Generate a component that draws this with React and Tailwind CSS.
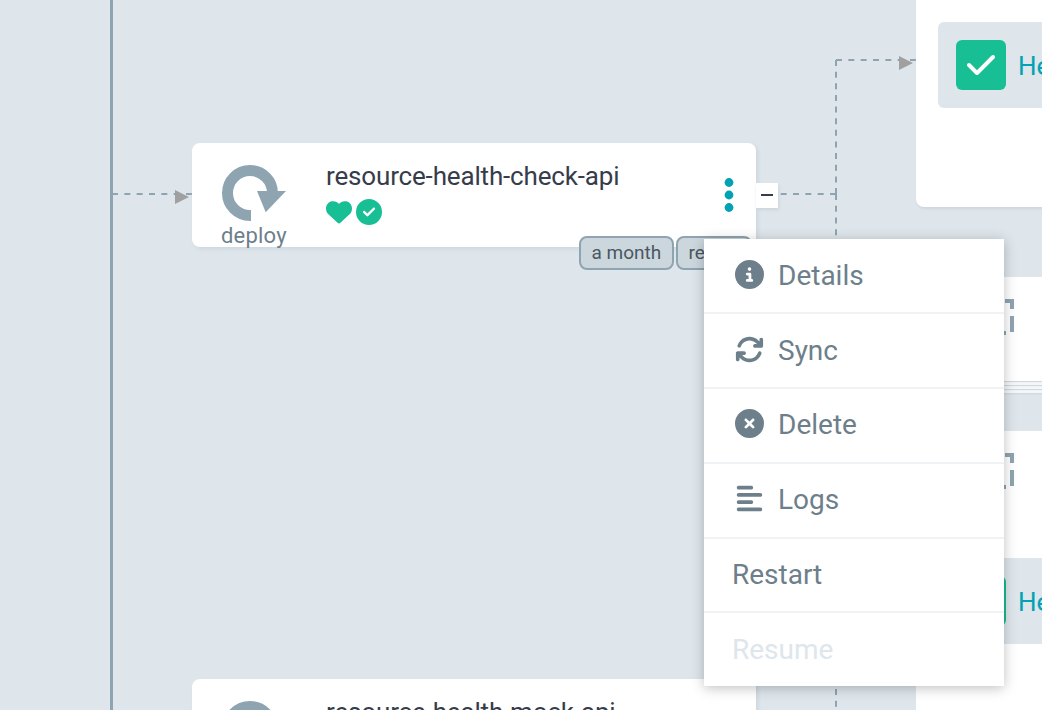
import React from "react";
import { FaCircleInfo, FaArrowsRotate, FaCircleXmark, FaAlignLeft, FaHeart, FaCircleCheck, FaCheck } from "react-icons/fa6";

const MENU = [
  { label: "Details", Icon: FaCircleInfo, height: "h-[75px]" },
  { label: "Sync", Icon: FaArrowsRotate, height: "h-[75px]" },
  { label: "Delete", Icon: FaCircleXmark, height: "h-[75px] pb-[2px]" },
  { label: "Logs", Icon: FaAlignLeft, height: "h-[75px] pb-[2px]" },
  { label: "Restart", height: "h-[74px]" },
  { label: "Resume", height: "h-[73px]", disabled: true },
];

function Edges() {
  return (
    <svg className="absolute inset-0" width="1042" height="710" fill="none" stroke="#8fa4b1" strokeWidth="2">
      <path d="M111.5 0V710" strokeWidth="3" />
      <path d="M112 194H192M756 194H836" strokeDasharray="6 6.333" />
      <path d="M836 60H916" strokeDasharray="6 6.333" />
      <path d="M836 60V194" strokeDasharray="6 5.64" />
      <path d="M836 194V710" strokeDasharray="6 5.786" />
      <path d="M175 190L189 197L175 204Z M899 56L913 63L899 70Z" fill="#a0a0a0" stroke="none" />
    </svg>
  );
}

function DeployIcon() {
  return (
    <svg className="block shrink-0" width="66" height="58" viewBox="0 0 66 58">
      <path d="M30 50.5H29A22.5 22.5 0 1 1 51.5 28" fill="none" stroke="#8fa4b1" strokeWidth="11" />
      <path d="M36 26H65L44.7 47.3Z" fill="#8fa4b1" stroke="none" />
    </svg>
  );
}

function ResourceNode({ name, place, children }) {
  return (
    <div className={`absolute left-[192px] flex h-[104px] w-[564px] rounded-lg bg-white shadow-[2px_2px_4px_#ccd6dd] ${place}`}>
      <div className="flex w-[134px] flex-col pt-[22px] pl-[29px]">
        <DeployIcon />
        <span className="text-[22px] leading-[26px] tracking-[0.2px] text-[#6d7f8b]">deploy</span>
      </div>
      <div className="flex flex-1 flex-col pt-[17px]">
        <span className="text-[26px] leading-[32px] tracking-[-0.16px] text-[#363c4a]">{name}</span>
        <div className="mt-[7px] flex gap-[4px] text-[26px] text-[#18be94]">
          <FaHeart />
          <FaCircleCheck />
        </div>
      </div>
      <svg className="mt-[33px] mr-[20px]" width="14" height="38" fill="#00a2b3">
        <circle cx="7" cy="6.5" r="4.4" />
        <circle cx="7" cy="19" r="4.4" />
        <circle cx="7" cy="31.5" r="4.4" />
      </svg>
      {children}
    </div>
  );
}

function Tag({ children, width }) {
  return (
    <span className={`flex h-[34px] items-center rounded-lg border-2 border-[#8fa4b1] bg-[#ccd7dd] pl-[10.5px] text-[19px] whitespace-nowrap text-[#495763] ${width}`}>
      {children}
    </span>
  );
}

function HealthRow() {
  return (
    <div className="flex h-[86px] w-[240px] items-center gap-[12px] rounded-md bg-[#dee6ec] pl-[18px] text-[26px] text-[#00a2b3]">
      <span className="flex h-[50px] w-[50px] shrink-0 items-center justify-center rounded-md bg-[#18be94] text-[32px] text-white">
        <FaCheck />
      </span>
      <span className="pt-[2px]">Healthy</span>
    </div>
  );
}

function DashedSquare({ place }) {
  return (
    <svg className={`absolute left-[978px] ${place}`} width="36" height="36" fill="#8fa4b1">
      <path d="M0 0H9V4H4V10H0ZM14 0H22V4H14ZM27 0H36V10H32V4H27ZM32 17H36V33H32ZM0 17H4V33H0ZM10 32H28V36H10Z" />
    </svg>
  );
}

export default function App() {
  return (
    <main className="relative h-[710px] w-[1042px] overflow-hidden bg-[#dee6ec] font-['Roboto',sans-serif]">
      <Edges />

      <ResourceNode name="resource-health-check-api" place="top-[143px]">
        <div className="absolute top-[93px] left-[387px] flex gap-[2px]">
          <Tag width="w-[95px]">a month</Tag>
          <Tag width="w-[76px]">rev:1</Tag>
        </div>
        <div className="absolute top-[40px] left-[564px] flex h-[25px] w-[22px] items-center justify-center bg-white pb-px shadow-[1px_2px_3px_#ccd6dd]">
          <span className="h-[2px] w-[12px] bg-[#363c4a]" />
        </div>
      </ResourceNode>
      <ResourceNode name="resource-health-mock-api" place="top-[679px]" />

      <section className="absolute top-[-20px] left-[916px] h-[227px] w-[300px] rounded-lg bg-white pt-[42px] pl-[22px] shadow-[1px_2px_3px_#ccd6dd]">
        <HealthRow />
      </section>
      <section className="absolute top-[277px] left-[916px] h-[104px] w-[300px] rounded-lg bg-white shadow-[0_1px_1px_#ccd6dd,0_4px_0_#f4f6f8,0_5px_1px_#ccd6dd,0_8px_0_#f4f6f8,0_9px_1px_#ccd6dd,0_12px_0_#f4f6f8,0_13px_2px_#ccd6dd]" />
      <section className="absolute top-[431px] left-[916px] h-[320px] w-[300px] rounded-lg bg-white pt-[127px] pl-[22px]">
        <HealthRow />
      </section>
      <DashedSquare place="top-[299px]" />
      <DashedSquare place="top-[453px]" />

      <ul className="absolute top-[239px] left-[704px] w-[300px] bg-white text-[28px] text-[#6d7f8b] shadow-[0_2px_12px_rgba(0,0,0,0.25)]">
        {MENU.map(({ label, Icon, height, disabled }) => (
          <li
            key={label}
            className={`flex items-center border-[#eff3f6] pl-[28px] ${height} ${disabled ? "text-[#dee6ec]" : "border-b-2"}`}
          >
            {Icon && (
              <span className="flex w-[46px] pb-[2px] pl-[3px] text-[29px]">
                <Icon />
              </span>
            )}
            <span>{label}</span>
          </li>
        ))}
      </ul>
    </main>
  );
}
